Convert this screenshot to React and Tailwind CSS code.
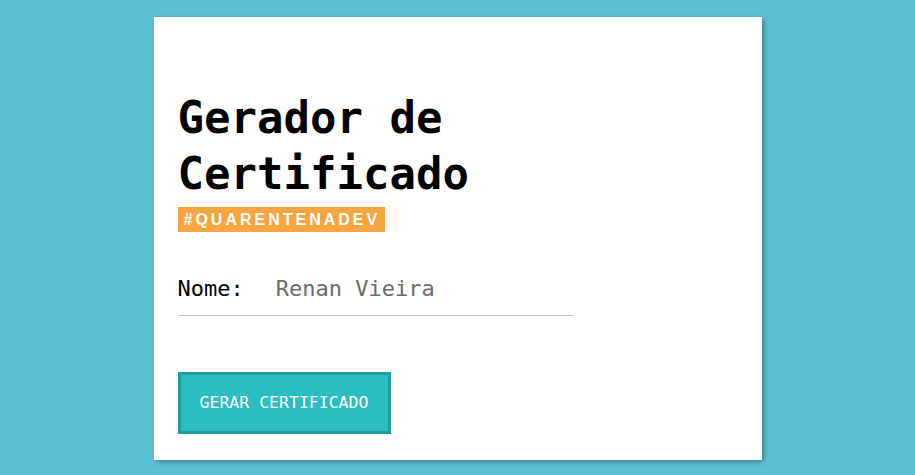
import React from 'react';

const mono = { fontFamily: '"DejaVu Sans Mono", "Liberation Mono", monospace' };

export default function App() {
  return (
    <div className="min-h-screen bg-[#5bc2d4] flex justify-center pt-[17px]">
      <div className="w-[608px] h-[443px] bg-white shadow-[2px_2px_5px_rgba(0,0,0,0.35)] pt-[73px] px-6">
        <h1 className="text-[44px] leading-[56px] font-bold text-black" style={mono}>
          Gerador de
          <br />
          Certificado
        </h1>
        <span className="inline-block mt-[5px] bg-[#f7a540] text-white font-bold text-[16px] leading-[25px] tracking-[3px] pl-[6px] pr-[5px] font-['Liberation_Sans',Arial,sans-serif]">
          #QUARENTENADEV
        </span>

        <div className="mt-[43px] w-[396px] flex items-end border-b border-[#c3c3c3] pb-[12px]" style={mono}>
          <label className="text-[22px] leading-[28px] text-black">Nome:</label>
          <input
            className="ml-[32px] flex-1 text-[22px] leading-[28px] text-[#6b6b6b] outline-none bg-transparent"
            style={mono}
            defaultValue="Renan Vieira"
          />
        </div>

        <button
          className="mt-[56px] w-[213px] h-[62px] bg-[#2bbdc1] border-[3px] border-[#1f9ea2] text-white text-[16.5px]"
          style={mono}
        >
          GERAR CERTIFICADO
        </button>
      </div>
    </div>
  );
}
